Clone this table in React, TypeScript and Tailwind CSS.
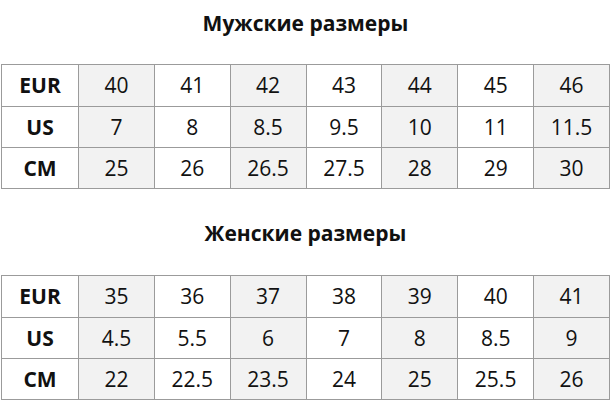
import React from "react";

const men = {
  EUR: ["40", "41", "42", "43", "44", "45", "46"],
  US: ["7", "8", "8.5", "9.5", "10", "11", "11.5"],
  CM: ["25", "26", "26.5", "27.5", "28", "29", "30"],
};
const women = {
  EUR: ["35", "36", "37", "38", "39", "40", "41"],
  US: ["4.5", "5.5", "6", "7", "8", "8.5", "9"],
  CM: ["22", "22.5", "23.5", "24", "25", "25.5", "26"],
};

function SizeTable({ data }: { data: Record<string, string[]> }) {
  const rows = ["EUR", "US", "CM"];
  return (
    <table className="w-[609px] border-collapse table-fixed">
      <colgroup>
        <col className="w-[77px]" />
        {data.EUR.map((_, i) => (
          <col key={i} />
        ))}
      </colgroup>
      <tbody>
        {rows.map((r, ri) => (
          <tr key={r} className={ri === 0 ? "h-[42px]" : "h-[41px]"}>
            <td className="border border-[#9b9b9b] bg-white p-0 text-center font-bold text-[21px] leading-none text-[#111]">
              {r}
            </td>
            {data[r].map((v, i) => (
              <td
                key={i}
                className={
                  "border border-[#9b9b9b] p-0 text-center text-[21px] leading-none text-[#111] " +
                  (i % 2 === 0 ? "bg-[#f2f2f2]" : "bg-white")
                }
              >
                {v}
              </td>
            ))}
          </tr>
        ))}
      </tbody>
    </table>
  );
}

export default function App() {
  return (
    <div
      className="w-[611px] h-[403px] bg-white overflow-hidden"
      style={{ fontFamily: '"Open Sans", "Noto Sans", sans-serif' }}
    >
      <div className="h-[64px] pt-[9px] text-center font-bold text-[21px] leading-[28px] text-[#111]">
        Мужские размеры
      </div>
      <div className="pl-[1px]">
        <SizeTable data={men} />
      </div>
      <div className="h-[86px] pt-[30px] text-center font-bold text-[21px] leading-[28px] text-[#111]">
        Женские размеры
      </div>
      <div className="pl-[1px]">
        <SizeTable data={women} />
      </div>
    </div>
  );
}
